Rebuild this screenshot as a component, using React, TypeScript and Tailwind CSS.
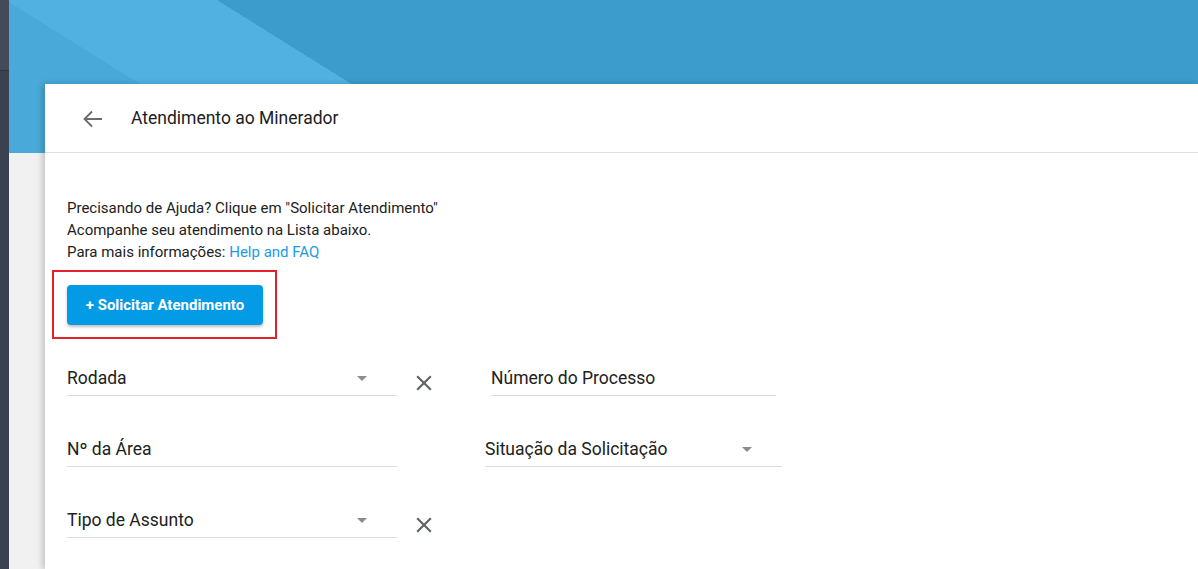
import React from 'react';

function Caret() {
  return (
    <svg width="10" height="5" viewBox="0 0 10 5" className="shrink-0">
      <path d="M0 0h10L5 5z" fill="#8c8c8c" />
    </svg>
  );
}

function ClearIcon() {
  return (
    <svg width="26" height="26" viewBox="0 0 24 24" className="shrink-0">
      <path
        d="M19 6.41L17.59 5 12 10.59 6.41 5 5 6.41 10.59 12 5 17.59 6.41 19 12 13.41 17.59 19 19 17.59 13.41 12z"
        fill="#5f6368"
      />
    </svg>
  );
}

function Field({ label, select, className }: { label: string; select?: boolean; className: string }) {
  return (
    <div className={`flex items-center justify-between border-b border-[#dcdcdc] pb-[5px] ${className}`}>
      <span className="text-[17.5px] leading-[24px] text-[#212121]">{label}</span>
      {select && <span className="mr-[30px] mt-[1px] flex"><Caret /></span>}
    </div>
  );
}

export default function App() {
  return (
    <div className="flex h-[569px] w-full overflow-hidden bg-[#f1f1f1] font-['Roboto',sans-serif]">
      {/* side rail */}
      <div className="flex w-[9px] shrink-0 flex-col">
        <div className="h-[71px] bg-[#454a5a] border-b border-[#2f3340]" />
        <div className="flex-1 bg-[#3b4052]" />
      </div>

      <div className="flex min-w-0 flex-1 flex-col">
        {/* blue banner */}
        <div className="h-[153px] shrink-0 bg-[linear-gradient(32deg,#49a9d9_0,#49a9d9_128px,#51b2e1_128px,#51b2e1_240px,#3c9ccb_240px)]" />

        {/* card */}
        <div className="-mt-[69px] ml-[36px] flex-1 bg-white shadow-[-3px_0_6px_rgba(0,0,0,0.18)]">
          <div className="flex h-[69px] items-center border-b border-[#e0e0e0] pl-[36px]">
            <svg width="24" height="24" viewBox="0 0 24 24" fill="none" className="mt-[1px]">
              <path d="M21 12H3.5M11 4.5L3.5 12l7.5 7.5" stroke="#6b6b6b" strokeWidth="1.8" />
            </svg>
            <span className="ml-[26px] text-[17.5px] leading-[24px] text-[#212121]">Atendimento ao Minerador</span>
          </div>

          <div className="pl-[22px] pt-[44px]">
            <div className="text-[15px] leading-[22px] text-[#212121]">
              <p>Precisando de Ajuda? Clique em "Solicitar Atendimento"</p>
              <p>Acompanhe seu atendimento na Lista abaixo.</p>
              <p>
                Para mais informações: <a className="text-[#1b9be3]">Help and FAQ</a>
              </p>
            </div>

            <div className="-ml-[15px] mt-[7px] flex h-[69px] w-[225px] items-center border-2 border-[#e3212b] pl-[13px]">
              <button className="h-[40px] w-[196px] rounded-[4px] bg-[#039be5] pt-[1px] text-[15px] font-bold text-white shadow-[0_2px_3px_rgba(0,0,0,0.25)]">
                + Solicitar Atendimento
              </button>
            </div>

            <div className="mt-[27px] flex items-end">
              <Field label="Rodada" select className="w-[330px]" />
              <div className="flex w-[54px] justify-center"><ClearIcon /></div>
              <Field label="Número do Processo" className="ml-[40px] w-[285px]" />
            </div>

            <div className="mt-[41px] flex items-end">
              <Field label="Nº da Área" className="w-[330px]" />
              <Field label="Situação da Solicitação" select className="ml-[88px] w-[297px]" />
            </div>

            <div className="mt-[41px] flex items-end">
              <Field label="Tipo de Assunto" select className="w-[330px]" />
              <div className="flex w-[54px] justify-center"><ClearIcon /></div>
            </div>
          </div>
        </div>
      </div>
    </div>
  );
}
